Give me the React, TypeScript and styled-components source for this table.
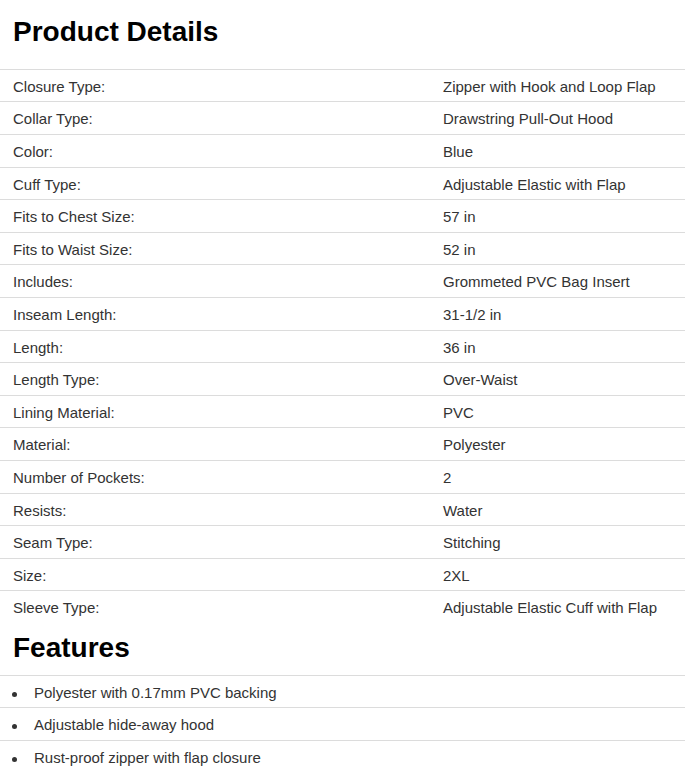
import React from "react";
import styled, { createGlobalStyle } from "styled-components";

const GlobalStyle = createGlobalStyle`
    body {
        margin: 0;
        background: #fff;
        font-family: Arial, "Liberation Sans", Helvetica, sans-serif;
    }
`;

const Page = styled.div`
    width: 685px;
`;

const Heading = styled.h2<{ $top: number; $bottom: number }>`
    font-size: 28px;
    line-height: 1.1;
    font-weight: 700;
    color: #000;
    margin: ${(props) => props.$top}px 0 ${(props) => props.$bottom}px;
    padding: 0 13px;
`;

const Table = styled.div`
    display: flex;
    flex-direction: column;
`;

const Row = styled.div`
    display: grid;
    grid-template-columns: 430px 1fr;
    border-top: 1px solid #dcdcdc;
    padding: 6px 13px 4px;
    font-size: 15px;
    line-height: 21.6px;
    color: #333;
`;

const Label = styled.span``;

const Value = styled.span``;

const FeatureList = styled.ul`
    list-style: none;
    margin: 0;
    padding: 0;
`;

const Feature = styled.li`
    position: relative;
    border-top: 1px solid #dcdcdc;
    padding: 6px 13px 4px 34px;
    font-size: 15px;
    line-height: 21.7px;
    color: #333;
    &::before {
        content: "";
        position: absolute;
        left: 12px;
        top: 16px;
        width: 5px;
        height: 5px;
        border-radius: 50%;
        background: #333;
    }
`;

interface Detail {
    label: string;
    value: string;
}

const details: Detail[] = [
    { label: "Closure Type:", value: "Zipper with Hook and Loop Flap" },
    { label: "Collar Type:", value: "Drawstring Pull-Out Hood" },
    { label: "Color:", value: "Blue" },
    { label: "Cuff Type:", value: "Adjustable Elastic with Flap" },
    { label: "Fits to Chest Size:", value: "57 in" },
    { label: "Fits to Waist Size:", value: "52 in" },
    { label: "Includes:", value: "Grommeted PVC Bag Insert" },
    { label: "Inseam Length:", value: "31-1/2 in" },
    { label: "Length:", value: "36 in" },
    { label: "Length Type:", value: "Over-Waist" },
    { label: "Lining Material:", value: "PVC" },
    { label: "Material:", value: "Polyester" },
    { label: "Number of Pockets:", value: "2" },
    { label: "Resists:", value: "Water" },
    { label: "Seam Type:", value: "Stitching" },
    { label: "Size:", value: "2XL" },
    { label: "Sleeve Type:", value: "Adjustable Elastic Cuff with Flap" },
];

const features = [
    "Polyester with 0.17mm PVC backing",
    "Adjustable hide-away hood",
    "Rust-proof zipper with flap closure",
];

const App = () => {
    return (
        <>
            <GlobalStyle />
            <Page>
                <Heading $top={17} $bottom={21}>
                    Product Details
                </Heading>
                <Table>
                    {details.map((d) => (
                        <Row key={d.label}>
                            <Label>{d.label}</Label>
                            <Value>{d.value}</Value>
                        </Row>
                    ))}
                </Table>
                <Heading $top={10} $bottom={11}>
                    Features
                </Heading>
                <FeatureList>
                    {features.map((f) => (
                        <Feature key={f}>{f}</Feature>
                    ))}
                </FeatureList>
            </Page>
        </>
    );
};

export default App;
